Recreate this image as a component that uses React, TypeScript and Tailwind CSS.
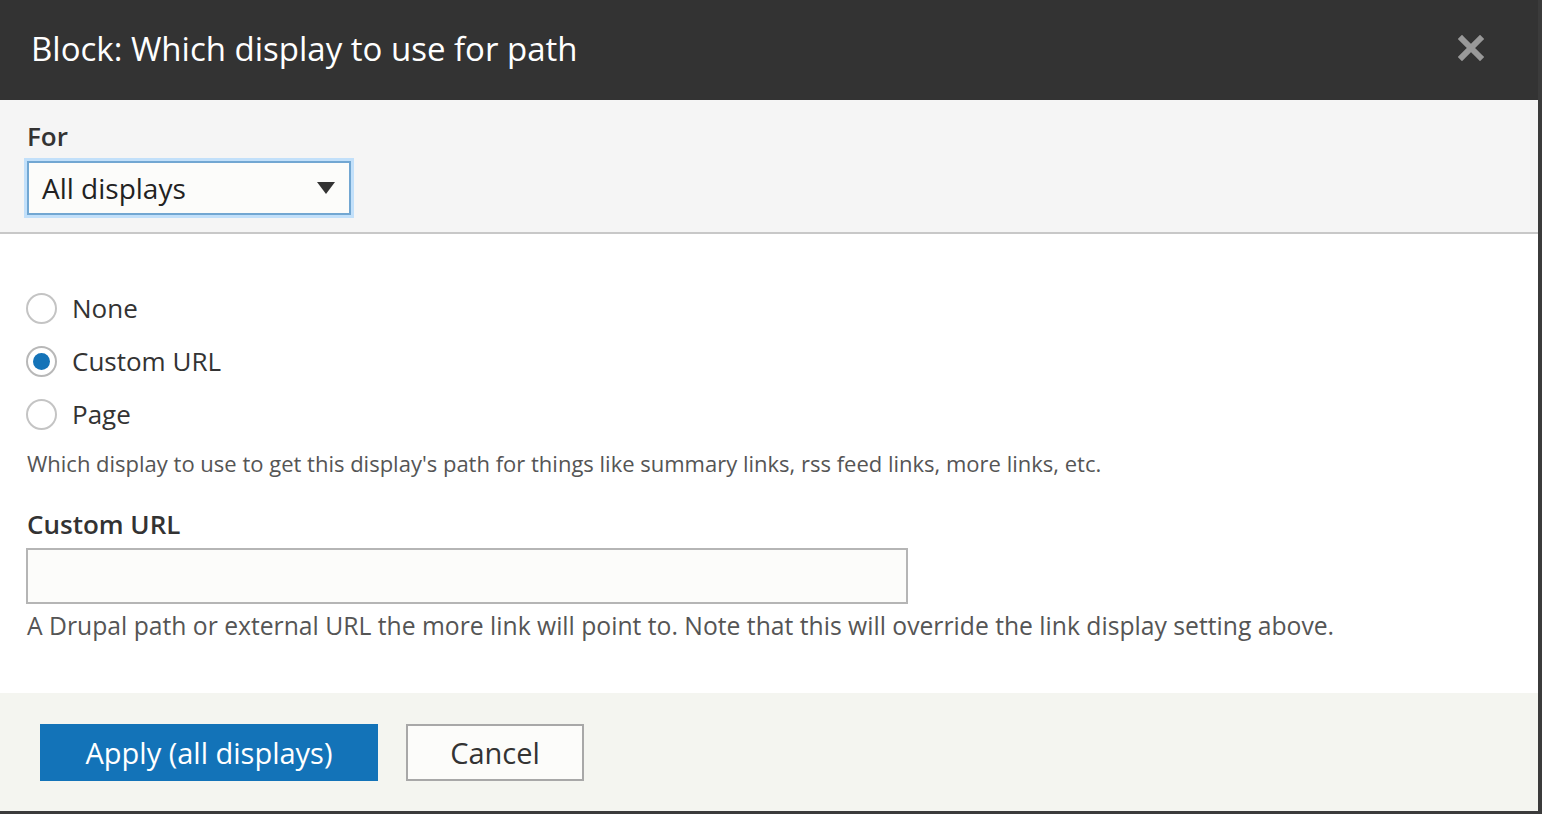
import React from "react";

function Radio({ checked, label }: { checked?: boolean; label: string }) {
  return (
    <label className="flex items-center h-[53px]">
      <span
        className={
          checked
            ? "w-[31px] h-[31px] rounded-full border-2 border-[#b8b8b8] bg-white flex items-center justify-center"
            : "w-[31px] h-[31px] rounded-full border-2 border-[#c4c4c4] bg-white"
        }
      >
        {checked && <span className="w-[17px] h-[17px] rounded-full bg-[#1473b8]" />}
      </span>
      <span className="ml-[15px] text-[26px] text-[#333]">{label}</span>
    </label>
  );
}

export default function App() {
  return (
    <div className="w-[1542px] h-[814px] bg-[#3b3b3b] overflow-hidden" style={{ fontFamily: '"Open Sans", "Noto Sans", sans-serif' }}>
      <div className="w-[1538px] h-[811px] flex flex-col bg-white">
        <div className="h-[100px] bg-[#333333] flex items-center justify-between pl-[31px] pr-[54px] shrink-0">
          <h1 className="text-white text-[33px] leading-none pb-[4px]">Block: Which display to use for path</h1>
          <svg width="26" height="26" viewBox="0 0 26 26" className="mb-[4px]">
            <path d="M4 4 L22 22 M22 4 L4 22" stroke="#999" strokeWidth="6" strokeLinecap="square" />
          </svg>
        </div>
        <div className="h-[134px] bg-[#f5f5f5] border-b-2 border-[#c8c8c8] pl-[24px] pt-[19px] shrink-0">
          <div className="pl-[3px] text-[26px] font-semibold text-[#333] leading-[34px]">For</div>
          <div className="mt-[5px] w-[330px] h-[60px] border-[3px] border-[#c2e0fa]">
            <div className="w-full h-full border-2 border-[#72a7d2] bg-[#fcfcfa] flex items-center justify-between pl-[13px] pr-[14px]">
              <span className="text-[28px] text-[#222]">All displays</span>
              <svg width="18" height="12" viewBox="0 0 18 12"><path d="M0 0 H18 L9 12 Z" fill="#333" /></svg>
            </div>
          </div>
        </div>
        <div className="flex-1 bg-white pl-[26px] pt-[48px]">
          <Radio label="None" />
          <Radio checked label="Custom URL" />
          <Radio label="Page" />
          <p className="mt-[7px] pl-[1px] text-[22px] text-[#555] leading-[30px]">
            Which display to use to get this display's path for things like summary links, rss feed links, more links, etc.
          </p>
          <div className="mt-[29px] pl-[1px] text-[26px] font-semibold text-[#333] leading-[34px]">Custom URL</div>
          <div className="mt-[7px] w-[882px] h-[56px] border-2 border-[#b5b5b5] bg-[#fcfcfa]" />
          <p className="mt-[5px] pl-[1px] text-[24.7px] text-[#555] leading-[34px]">
            A Drupal path or external URL the more link will point to. Note that this will override the link display setting above.
          </p>
        </div>
        <div className="h-[118px] bg-[#f4f5f0] flex items-start pl-[40px] pt-[31px] gap-[28px] shrink-0">
          <button className="w-[338px] h-[57px] bg-[#1373b8] text-white text-[29px]">Apply (all displays)</button>
          <button className="w-[178px] h-[57px] border-2 border-[#a8a8a8] bg-[#fcfcfa] text-[#333] text-[29px]">Cancel</button>
        </div>
      </div>
    </div>
  );
}
